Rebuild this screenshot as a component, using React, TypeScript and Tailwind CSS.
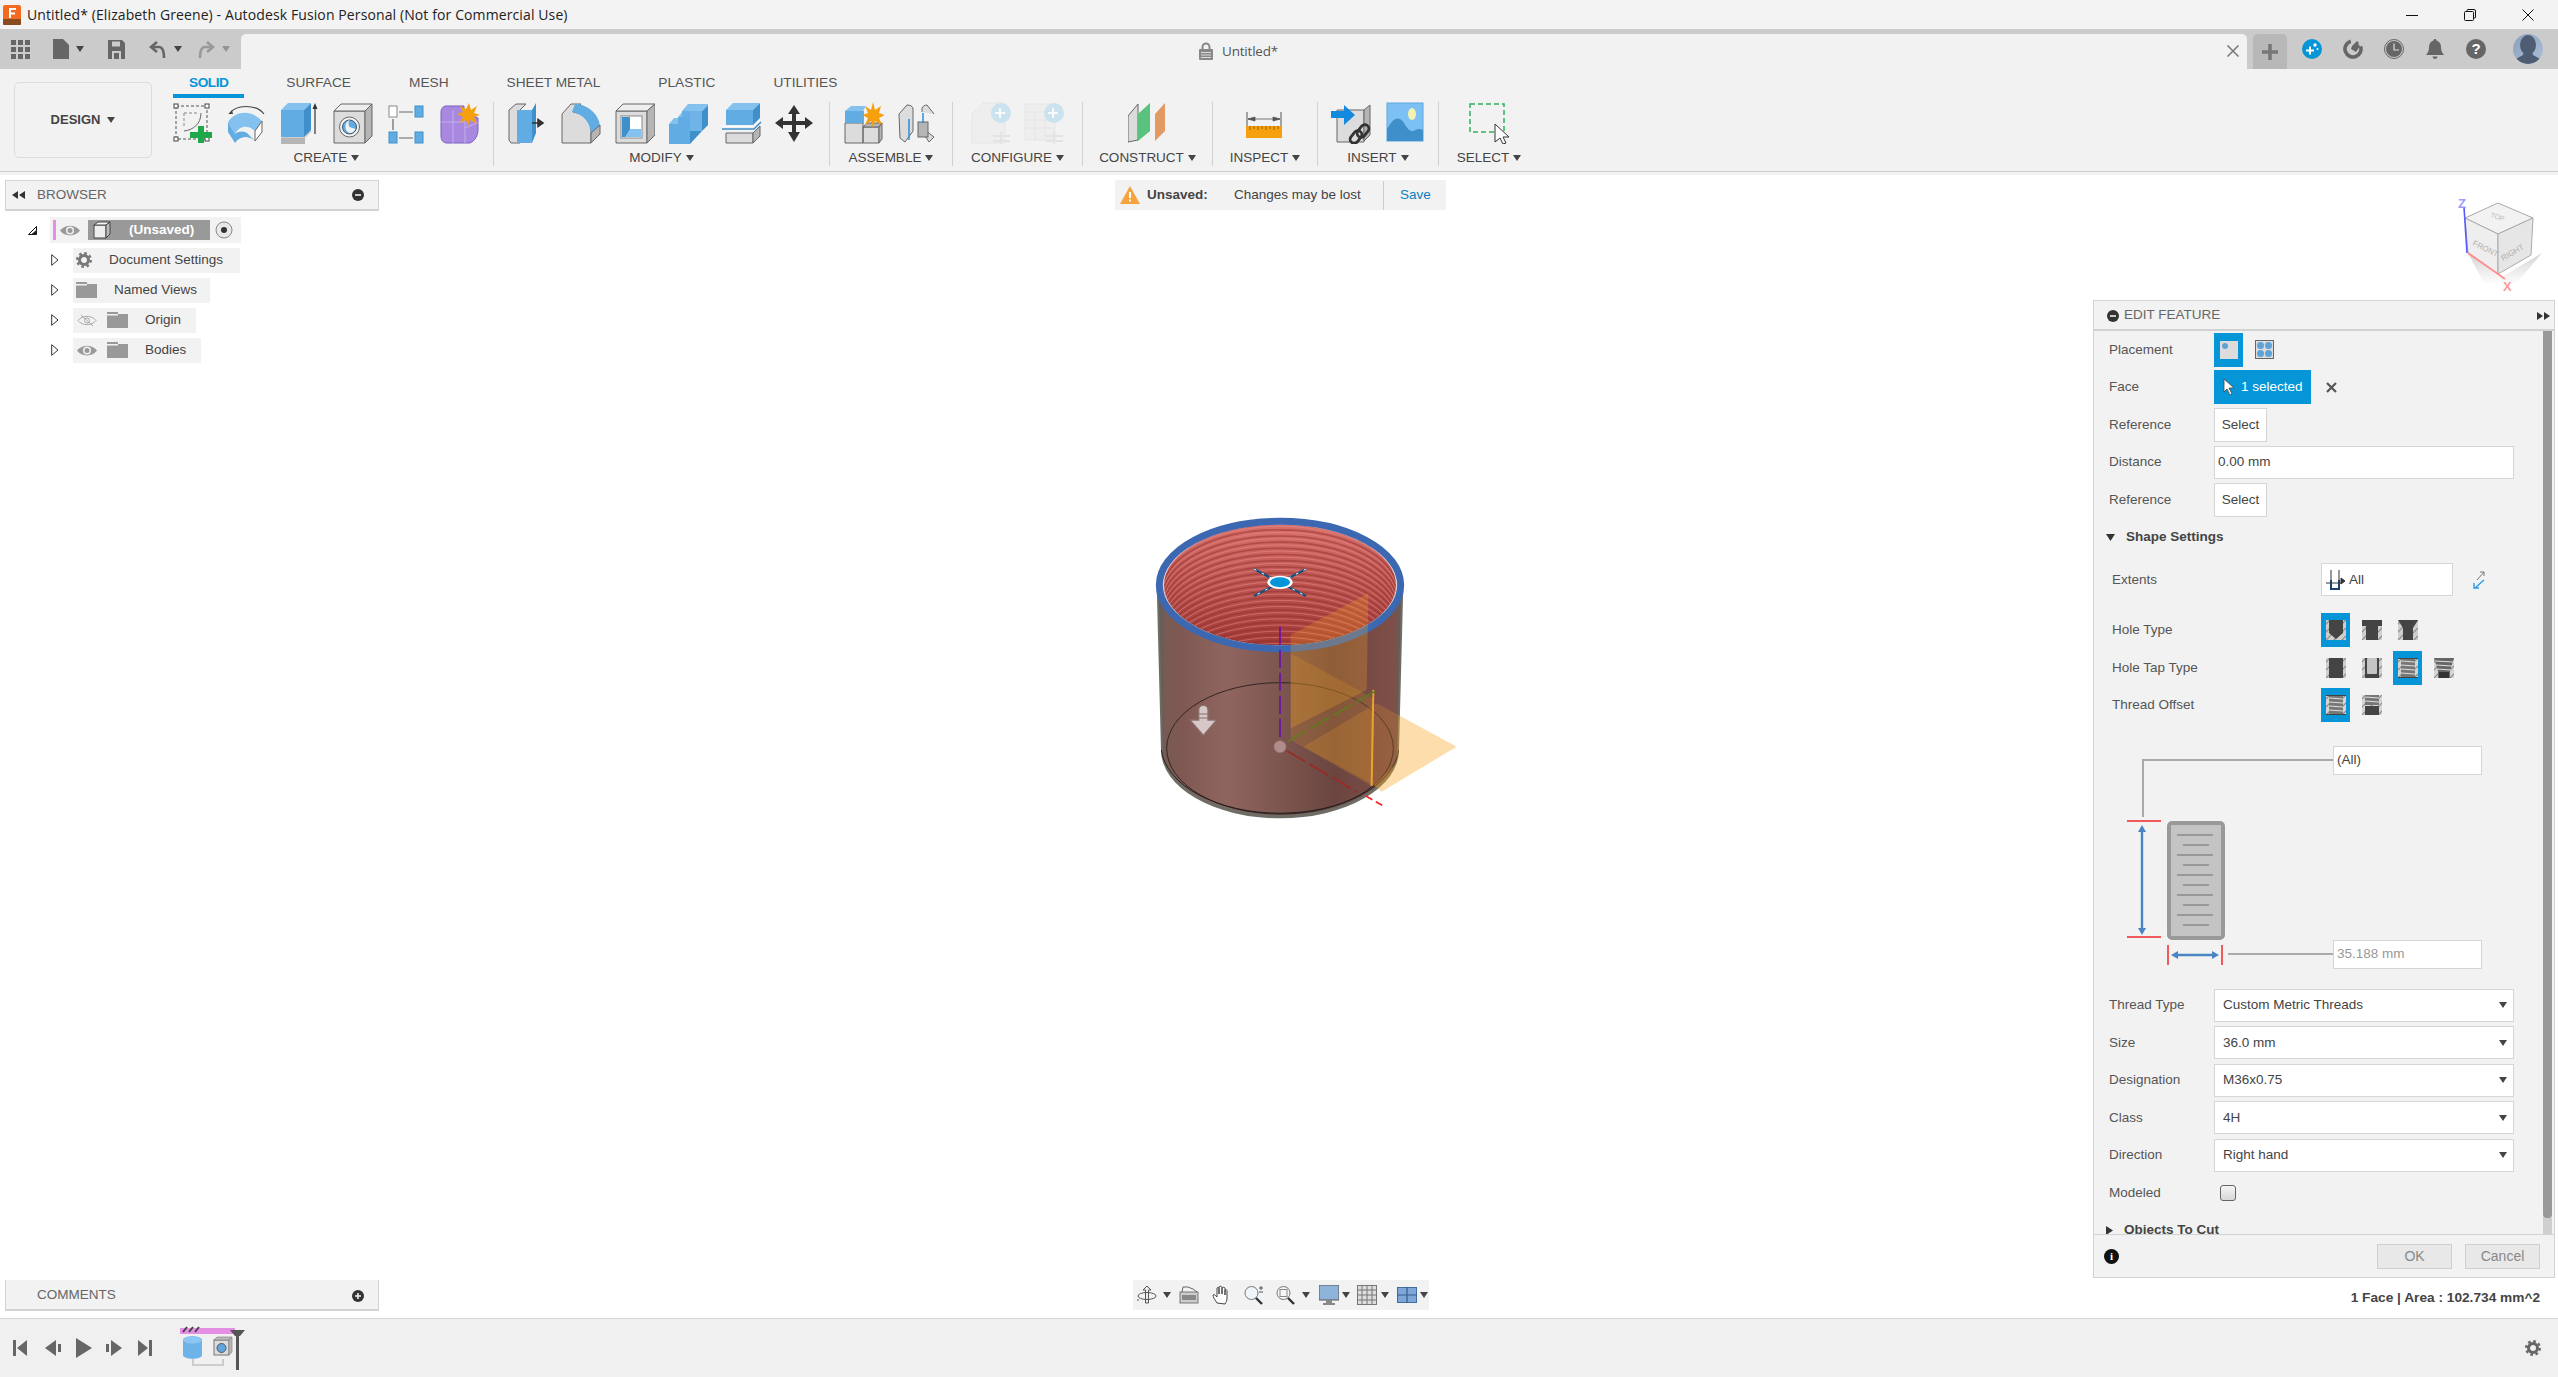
import React from 'react';

type IconProps = { className?: string };

const Caret = ({ className = 'ml-1' }: IconProps) => (
  <svg viewBox="0 0 8 6" className={`w-[8px] h-[6px] shrink-0 ${className}`}>
    <path d="M0 0h8L4 6z" fill="#444" />
  </svg>
);

// top bar
const AppLogo = () => (
  <svg viewBox="0 0 18 20" className="w-[18px] h-[20px]">
    <rect width="18" height="20" rx="2" fill="#f26b21" />
    <rect y="14" width="18" height="6" rx="1" fill="#8a4a20" />
    <path d="M6 3h7v2H8v2.5h4v2H8V13H6z" fill="#fff" />
  </svg>
);
const GridIcon = () => (
  <svg viewBox="0 0 19 19" className="w-[19px] h-[19px] fill-[#666]">
    {[0, 7, 14].map((y) => [0, 7, 14].map((x) => <rect key={`${x}${y}`} x={x} y={y} width="5" height="5" />))}
  </svg>
);
const FileIcon = () => (
  <svg viewBox="0 0 16 20" className="w-[16px] h-[20px]"><path d="M0 0h10l6 6v14H0z" fill="#666" /></svg>
);
const SaveIcon = () => (
  <svg viewBox="0 0 17 19" className="w-[17px] h-[19px]">
    <path d="M0 0h14l3 3v16H0z" fill="#666" />
    <rect x="4" y="1.5" width="8" height="5" fill="#cbcbcb" />
    <rect x="4" y="11" width="9" height="8" fill="#cbcbcb" />
    <rect x="6" y="13" width="5" height="6" fill="#666" />
  </svg>
);
const UndoIcon = ({ className }: IconProps) => (
  <svg viewBox="0 0 18 18" className={`w-[18px] h-[18px] ${className}`} fill="none" stroke="currentColor" strokeWidth="2.6">
    <path d="M8 2 2 7l6 5" />
    <path d="M3 7h7c4 0 5 4 5 11" />
  </svg>
);
const PlusIcon = () => (
  <svg viewBox="0 0 16 16" className="w-[16px] h-[16px]"><path d="M6.2 0h3.6v6.2H16v3.6H9.800V16H6.200V9.800H0V6.200h6.200z" fill="#777" /></svg>
);
const SparkleCircle = () => (
  <svg viewBox="0 0 20 20" className="w-[20px] h-[20px]">
    <circle cx="10" cy="10" r="10" fill="#0696d7" />
    <path d="M7 7.500v3H4v2h3v3h2v-3h3v-2H9v-3z" fill="#fff" />
    <circle cx="13" cy="6" r="1.700" fill="#fff" />
    <circle cx="15.500" cy="10" r="1" fill="#fff" />
  </svg>
);
const PlugIcon = () => (
  <svg viewBox="0 0 20 20" className="w-[20px] h-[20px]">
    <circle cx="10" cy="10" r="8" fill="none" stroke="#666" strokeWidth="3.600" strokeDasharray="38 12" transform="rotate(-20 10 10)" />
    <path d="M9 7l5-5 2 2-1 1 2 2-4 6-5-3z" fill="#666" />
  </svg>
);
const ClockIcon = () => (
  <svg viewBox="0 0 20 20" className="w-[20px] h-[20px]">
    <circle cx="10" cy="10" r="9.500" fill="none" stroke="#666" />
    <circle cx="10" cy="10" r="8" fill="#666" />
    <path d="M10 4.500V11h5" fill="none" stroke="#ddd" strokeWidth="1.200" />
  </svg>
);
const BellIcon = () => (
  <svg viewBox="0 0 18 20" className="w-[18px] h-[20px]">
    <path d="M9 0c1 0 1.500.6 1.500 1.600C13.500 2.500 15 5 15 8c0 4 1 5.500 3 8H0c2-2.500 3-4 3-8 0-3 1.500-5.500 4.500-6.400C7.500.6 8 0 9 0z" fill="#666" />
    <path d="M6.500 17.500h5A2.500 2.500 0 0 1 6.500 17.500z" fill="#666" />
  </svg>
);
const HelpIcon = () => (
  <div className="w-[20px] h-[20px] rounded-full bg-[#666] text-white text-[15px] font-bold leading-[20px] text-center">?</div>
);
const Avatar = () => (
  <svg viewBox="0 0 30 30" className="w-[30px] h-[30px]">
    <defs>
      <linearGradient id="av" x1="0" x2="1" y1="0" y2="1"><stop offset="0" stopColor="#8aa0bd" /><stop offset="1" stopColor="#aebfd6" /></linearGradient>
      <clipPath id="avc"><circle cx="15" cy="15" r="15" /></clipPath>
    </defs>
    <circle cx="15" cy="15" r="15" fill="url(#av)" />
    <g clipPath="url(#avc)" fill="#4e5d73">
      <ellipse cx="15" cy="11" rx="8" ry="10" />
      <path d="M11 17h8l1 4 9 5v6H1v-6l9-5z" />
    </g>
  </svg>
);

// toolbar icons, all 40x42
const Ic = ({ children }: { children: React.ReactNode }) => (
  <svg viewBox="0 0 40 42" className="w-[40px] h-[42px] shrink-0">{children}</svg>
);
const BL = '#62ace4';
const BD = '#3f8fca';
const BT = '#85c1ee';
const GR = '#dcdcdc';
const GD = '#b5b5b5';
const OL = '#666';

const SketchIc = () => (
  <Ic>
    <rect x="3" y="4" width="31" height="33" fill="none" stroke="#555" strokeDasharray="3 2" />
    <path d="M28 11C28 22 20 28 11 29" fill="none" stroke="#666" />
    <path d="M11 11h14M11 11v14" fill="none" stroke="#888" strokeDasharray="3 2" />
    {[[3, 4], [34, 4], [3, 37], [34, 37]].map(([x, y]) => <rect key={`${x}-${y}`} x={x - 2} y={y - 2} width="4" height="4" fill="#fff" stroke="#444" />)}
    <path d="M26 25h6v6h8v6h-8v5h-6v-5h-8v-6h8z" fill="#1ea84a" transform="translate(-1 -1)" />
  </Ic>
);
const RevolveIc = () => (
  <Ic>
    <path d="M3 12C10 2 30 2 38 12" fill="none" stroke="#444" strokeWidth="1.200" />
    <path d="M3 12l3-4 1 4z" fill="#444" />
    <path d="M2 20C10 8 26 8 36 19l-7 10C22 23 14 23 9 32z" fill={BT} />
    <path d="M2 20v10l7 11V32z M29 29v10l-8-8c-4-2-8-2-12 1v9C14 34 22 33 29 39z" fill={BL} />
    <path d="M29 29l7-10v11l-7 9z" fill="#fff" stroke="#666" />
  </Ic>
);
const ExtrudeIc = () => (
  <Ic>
    <path d="M1 36 25 36 32 29H8z" fill="#ccc" />
    <path d="M1 36h24v6H1z" fill={GD} />
    <path d="M1 8h23v27H1z" fill={BL} />
    <path d="M1 8l7-7h23l-7 7z" fill={BT} />
    <path d="M24 8l7-7v27l-7 7z" fill={BD} />
    <path d="M35 32V4" stroke="#333" strokeWidth="1.200" />
    <path d="M32.500 7 35 1l2.500 6z" fill="#333" />
  </Ic>
);
const HoleIc = () => (
  <Ic>
    <path d="M1 9h31v32H1z" fill={GR} stroke={OL} />
    <path d="M1 9l7-7h31l-7 7z" fill="#eee" stroke={OL} />
    <path d="M32 9l7-7v32l-7 7z" fill={GD} stroke={OL} />
    <circle cx="16.500" cy="25" r="10" fill="#f2f2f2" stroke={OL} />
    <circle cx="16.500" cy="25" r="7" fill={BL} stroke="#456" />
    <path d="M16.500 25a7 7 0 0 1 0-7 7 7 0 0 0-4 6 7 7 0 0 0 4 7 7 7 0 0 0 6-4z" fill="#f2f2f2" />
  </Ic>
);
const PatternIc = () => (
  <Ic>
    <rect x="2" y="4" width="8" height="11" fill="#fff" stroke="#888" />
    <rect x="28" y="4" width="8" height="11" fill={BL} stroke={BD} />
    <rect x="2" y="30" width="8" height="11" fill={BL} stroke={BD} />
    <rect x="28" y="30" width="8" height="11" fill={BL} stroke={BD} />
    <path d="M12 10h14M6 17v11M12 36h14" stroke="#666" strokeWidth="1.200" />
  </Ic>
);
const FormIc = () => (
  <Ic>
    <path d="M1 10c0-3 2-6 5-6h18v6l14 6v12c0 5-3 11-8 13H7c-4 0-6-3-6-7z" fill="#a989e0" stroke="#7d5fc2" />
    <path d="M1 20h24M13 8v33M25 10v31M25 26l14-6" stroke="#c4aeea" fill="none" />
    <path d="M29 1l2 7 6-4-3 7 6 2-6 2 3 7-7-4-2 6-2-6-6 3 3-6-6-3 6-2-3-6 6 3z" fill="#f5a00c" />
  </Ic>
);
const PressIc = () => (
  <Ic>
    <path d="M1 8l7-6h10L12 8v33H3l-2-3z" fill={GR} stroke={OL} />
    <path d="M9 8h15v33H9z" fill={BL} />
    <path d="M9 8l8-7h8v28l-1 12" fill="none" />
    <path d="M24 8l4-7v30l-4 10z" fill={BD} />
    <path d="M24 21h10M30 17.500l5 3.500-5 3.500z" stroke="#333" strokeWidth="1.600" fill="#333" />
  </Ic>
);
const FilletIc = () => (
  <Ic>
    <path d="M1 12 10 2h10L12 10 C24 12 30 20 30 29v12H1z" fill={GR} stroke={OL} />
    <path d="M14 2c12 0 24 10 25 22l-9 7C29 20 22 12 11 10z" fill={BL} />
    <path d="M30 31l9-8v9l-9 9z" fill={GD} stroke={OL} />
  </Ic>
);
const ShellIc = () => (
  <Ic>
    <path d="M1 9h31v32H1z" fill={GR} stroke={OL} />
    <path d="M1 9l7-7h32l-8 7z" fill="#eee" stroke={OL} />
    <path d="M32 9l8-7v31l-8 8z" fill={GD} stroke={OL} />
    <rect x="6" y="14" width="21" height="22" fill="#fff" stroke="#888" />
    <path d="M7 15h8v12h11v8H7z" fill={BD} />
    <path d="M15 27h11v8H10z" fill={BT} />
  </Ic>
);
const CombineIc = () => (
  <Ic>
    <path d="M1 22h9v-7h12v27H1z" fill={BL} />
    <path d="M1 22l5-6h4v6zM10 15l5-6h7v6z" fill={BT} />
    <path d="M14 9l6-7h21v0l-7 7z" fill={BT} />
    <path d="M14 9h20v20H22v13H14z" fill={BL} opacity=".9" />
    <path d="M34 9l7-7v20l-7 7zM22 29h12l-12 13z" fill={BD} />
  </Ic>
);
const OffsetIc = () => (
  <Ic>
    <path d="M4 8h27v15H4z" fill={BL} />
    <path d="M4 8l7-7h27l-7 7z" fill={BT} />
    <path d="M31 8l7-7v15l-7 7z" fill={BD} />
    <path d="M0 27h32l7-7" fill="none" stroke={BD} strokeWidth="1.500" />
    <path d="M0 24.500h31l7-7" fill="none" stroke="#fff" strokeWidth="1" />
    <path d="M4 31h27v10H4z" fill={GR} stroke={OL} />
    <path d="M31 31l7-7v10l-7 7z" fill={GD} stroke={OL} />
  </Ic>
);
const MoveIc = () => (
  <Ic>
    <path d="M19 3 13 12h4v7H8v-4l-8 6 8 6v-4h9v7h-4l6 10 6-10h-4v-7h9v4l8-6-8-6v4h-9v-7h4z" fill="#333" />
  </Ic>
);
const NewCompIc = () => (
  <Ic>
    <path d="M1 21h18v20H1zM19 25h16v16H19z" fill={GR} stroke={OL} />
    <path d="M19 25l4-4h15l-3 4zM35 25l3-4v16l-3 4z" fill={GD} stroke={OL} />
    <path d="M1 9h19v12H1z" fill={BL} />
    <path d="M1 9l6-5h15l-3 5z" fill={BT} />
    <path d="M29 0l2 8 6-4-2 7 6 2-6 3 3 7-7-4-2 7-2-7-6 4 3-7-6-3 6-2-3-7 6 4z" fill="#f5a00c" />
  </Ic>
);
const JointIc = () => (
  <Ic>
    <path d="M1 12 9 3c3 0 5 1 6 3v23L7 40 2 36z" fill={GR} stroke={OL} />
    <path d="M36 12l-7-9c-2 0-4 1-5 3v4M24 26v3l7 11 5-5z" fill={GR} stroke={OL} />
    <path d="M11 17v21" stroke="#2b8fdb" strokeWidth="1.500" />
    <rect x="20" y="20" width="10" height="15" fill={GD} stroke={OL} />
    <path d="M25 11v10" stroke="#2b8fdb" strokeWidth="1.500" />
  </Ic>
);
const ConfigIc = () => (
  <Ic>
    <g opacity=".65">
      <path d="M1 41V12L12 1h22v40z" fill="#ececec" stroke="#e2e2e2" />
      <circle cx="30" cy="11" r="10" fill="#b7dcee" />
      <path d="M29 6v10M24 11h10" stroke="#fff" strokeWidth="2" />
      <path d="M22 34h17M22 39h17M30 30v12" stroke="#dcdcdc" strokeWidth="2" />
    </g>
  </Ic>
);
const TableIc = () => (
  <Ic>
    <g opacity=".65">
      <rect x="1" y="2" width="30" height="36" fill="#ececec" stroke="#e2e2e2" />
      <path d="M1 10h30M1 18h30M1 26h30M11 10v28M21 10v28" stroke="#dedede" />
      <circle cx="30" cy="11" r="10" fill="#b7dcee" />
      <path d="M29 6v10M24 11h10" stroke="#fff" strokeWidth="2" />
      <path d="M22 34h17M22 39h17M30 30v12" stroke="#dcdcdc" strokeWidth="2" />
    </g>
  </Ic>
);
const PlaneIc = () => (
  <Ic>
    <path d="M0 14 10 2v36l-10 2z" fill={GR} stroke={OL} />
    <path d="M10 12 22 1v28L10 39z" fill="#59c27c" />
    <path d="M27 12 37 1v28L27 39z" fill="#e39a62" />
  </Ic>
);
const MeasureIc = () => (
  <Ic>
    <path d="M2 10v19M36 10v19" stroke="#555" />
    <path d="M3 17h32M3 17l7-2v4zM35 17l-7-2v4z" stroke="#555" fill="#555" strokeWidth=".8" />
    <rect x="1" y="24" width="36" height="12" fill="#f5a00c" />
    <path d="M5 24v4M9 24v3M13 24v4M17 24v3M21 24v4M25 24v3M29 24v4M33 24v3" stroke="#9a6200" />
  </Ic>
);
const LinkIc = () => (
  <Ic>
    <path d="M6 8h27v32H6z" fill={GR} stroke={OL} />
    <path d="M33 8l6-5v30l-6 6z" fill={GD} stroke={OL} />
    <path d="M0 9h13V3l11 10-11 10v-7H0z" fill="#1389e0" />
    <g fill="none" stroke="#333" strokeWidth="2.800">
      <rect x="28" y="22" width="8" height="14" rx="4" transform="rotate(38 32 29)" />
      <rect x="21" y="28" width="8" height="14" rx="4" transform="rotate(38 25 35)" />
    </g>
  </Ic>
);
const CanvasIc = () => (
  <Ic>
    <rect x="2" y="1" width="36" height="38" fill="#7cc0f4" stroke="#5aa6dd" />
    <ellipse cx="27" cy="12" rx="4" ry="6" fill="#f4f2b0" />
    <path d="M2 39V27c5-8 8-12 13-10 5 3 6 10 11 12 4 1 6-4 12-1v11z" fill="#3f8fca" />
  </Ic>
);
const SelectIc = () => (
  <Ic>
    <rect x="1" y="2" width="34" height="28" fill="none" stroke="#2fb35f" strokeWidth="1.500" strokeDasharray="5 3" />
    <path d="M26 22v18l5-4 3 6 3-1-3-6h6z" fill="#fff" stroke="#333" />
  </Ic>
);

const Tab = ({ label, active }: { label: string; active?: boolean }) => (
  <div className={`h-[29px] pt-[3px] px-[16px] flex items-center border-b-4 text-[13.7px] ${active ? 'border-[#0696d7] text-[#0696d7] font-bold tracking-[-0.5px]' : 'border-transparent text-[#555]'}`}>
    {label}
  </div>
);

const Group = ({ label, w, icons, last }: { label: string; w: string; icons: React.ReactNode; last?: boolean }) => (
  <div className={`${w} mt-[4px] h-[64px] flex flex-col items-center ${last ? '' : 'border-r border-[#d0d0d0]'}`}>
    <div className="flex gap-[13.5px] h-[42px]">{icons}</div>
    <div className="mt-[6px] h-[16px] flex items-center text-[13.5px] text-[#444]">
      {label}
      <Caret />
    </div>
  </div>
);

const Toolbar = () => (
  <div className="bg-[#f2f2f2] pb-[3px]">
    <div className="h-[103px] flex border-b border-[#cfcfcf]">
      <div className="ml-[14px] mt-[13px] w-[138px] h-[76px] rounded-[5px] border border-[#dcdcdc] flex items-center justify-center text-[13px] font-bold text-[#444]">
        DESIGN<Caret className="ml-[7px]" />
      </div>
      <div className="ml-[8px] flex flex-col">
        <div className="flex ml-[13px] gap-[26px]">
          <Tab label="SOLID" active />
          <Tab label="SURFACE" />
          <Tab label="MESH" />
          <Tab label="SHEET METAL" />
          <Tab label="PLASTIC" />
          <Tab label="UTILITIES" />
        </div>
        <div className="flex">
          <Group label="CREATE" w="w-[334px]" icons={<><SketchIc /><RevolveIc /><ExtrudeIc /><HoleIc /><PatternIc /><FormIc /></>} />
          <Group label="MODIFY" w="w-[336px]" icons={<><PressIc /><FilletIc /><ShellIc /><CombineIc /><OffsetIc /><MoveIc /></>} />
          <Group label="ASSEMBLE" w="w-[123px]" icons={<><NewCompIc /><JointIc /></>} />
          <Group label="CONFIGURE" w="w-[130px]" icons={<><ConfigIc /><TableIc /></>} />
          <Group label="CONSTRUCT" w="w-[130px]" icons={<PlaneIc />} />
          <Group label="INSPECT" w="w-[105px]" icons={<MeasureIc />} />
          <Group label="INSERT" w="w-[121px]" icons={<><LinkIc /><CanvasIc /></>} />
          <Group label="SELECT" w="w-[100px]" last icons={<SelectIc />} />
        </div>
      </div>
    </div>
  </div>
);

// browser tree
const Eye = ({ off }: { off?: boolean }) => (
  <svg viewBox="0 0 20 13" className="w-[20px] h-[13px] shrink-0">
    {off ? (
      <>
        <path d="M1 6.500C5 1 15 1 19 6.500 15 12 5 12 1 6.500z" fill="none" stroke="#aaa" />
        <circle cx="10" cy="6.500" r="2.500" fill="none" stroke="#aaa" />
        <path d="M4 1l12 11" stroke="#aaa" />
      </>
    ) : (
      <>
        <path d="M0 6.500C5 0 15 0 20 6.500 15 13 5 13 0 6.500z" fill="#999" />
        <circle cx="10" cy="6.500" r="4" fill="#f2f2f2" />
        <circle cx="10" cy="6.500" r="2.500" fill="#999" />
      </>
    )}
  </svg>
);
const Folder = () => (
  <svg viewBox="0 0 21 16" className="w-[21px] h-[16px] shrink-0">
    <path d="M0 0h11v2h10v14H0z" fill="#999" />
    <path d="M11 2H0v1.500h11z" fill="#f2f2f2" />
  </svg>
);
const Expand = () => (
  <svg viewBox="0 0 8 12" className="w-[8px] h-[12px] shrink-0"><path d="M.7.700 7 6 .7 11.300z" fill="#fff" stroke="#333" /></svg>
);
const Gear = () => (
  <svg viewBox="0 0 16 16" className="w-[16px] h-[16px] shrink-0">
    <circle cx="8" cy="8" r="4.500" fill="none" stroke="#777" strokeWidth="3" />
    <circle cx="8" cy="8" r="6.800" fill="none" stroke="#777" strokeWidth="2.400" strokeDasharray="2.700 2.640" />
  </svg>
);
const MinusCircle = ({ plus }: { plus?: boolean }) => (
  <svg viewBox="0 0 12 12" className="w-[12px] h-[12px] shrink-0">
    <circle cx="6" cy="6" r="6" fill="#333" />
    <path d={plus ? 'M3 6h6M6 3v6' : 'M3 6h6'} stroke="#f2f2f2" strokeWidth="1.600" />
  </svg>
);
const Rewind = ({ flip }: { flip?: boolean }) => (
  <svg viewBox="0 0 13 8" className={`w-[13px] h-[8px] shrink-0 ${flip ? 'rotate-180' : ''}`}>
    <path d="M6 0v8L0 4zM13 0v8L7 4z" fill="#333" />
  </svg>
);

const TreeRow = ({ w, left, label, labelW }: { w: string; left: React.ReactNode; label: string; labelW: string }) => (
  <div className="h-[30px] flex items-center pl-[46px]">
    <Expand />
    <div className={`ml-[14px] ${w} h-[25px] bg-[#f2f2f2] flex items-center pl-[3px]`}>
      {left}
      <span className={`${labelW} text-[13.5px] text-[#444] text-center whitespace-nowrap`}>{label}</span>
    </div>
  </div>
);

const Browser = () => (
  <div>
    <div className="h-[31px] w-[374px] bg-[#f2f2f2] border border-[#d2d2d2] border-b-2 flex items-center pl-[6px] pr-[14px] text-[13.5px] text-[#666]">
      <Rewind />
      <span className="ml-[12px] flex-1">BROWSER</span>
      <MinusCircle />
    </div>
    <div className="h-[6px]" />
    <div className="h-[26px] flex items-center pl-[23px]">
      <svg viewBox="0 0 9 9" className="w-[9px] h-[9px]"><path d="M8.500.500v8H.500z" fill="#fff" stroke="#111" /><path d="M8.500 4v4.500H3z" fill="#222" /></svg>
      <div className="ml-[13px] w-[191px] h-[26px] bg-[#f2f2f2] flex items-center">
        <div className="ml-[3px] w-[3px] h-[20px] bg-[#e48ee4]" />
        <div className="ml-[4px]"><Eye /></div>
        <div className="ml-[8px] w-[122px] h-[20px] bg-[#999] flex items-center">
          <svg viewBox="0 0 18 18" className="ml-[5px] w-[18px] h-[18px] shrink-0">
            <path d="M1 4h12v13H1z" fill="#eee" stroke="#444" />
            <path d="M1 4l4-3h12l-4 3z" fill="#f8f8f8" stroke="#444" />
            <path d="M13 4l4-3v12l-4 4z" fill="#bbb" stroke="#444" />
          </svg>
          <span className="ml-[18px] text-[13.5px] font-bold text-white">(Unsaved)</span>
        </div>
        <svg viewBox="0 0 18 18" className="ml-[5px] w-[18px] h-[18px]">
          <circle cx="9" cy="9" r="8" fill="#e8e8e8" stroke="#888" />
          <circle cx="9" cy="9" r="3" fill="#333" />
        </svg>
      </div>
    </div>
    <div className="h-[2px]" />
    <TreeRow w="w-[167px]" labelW="ml-[17px]" left={<Gear />} label="Document Settings" />
    <TreeRow w="w-[137px]" labelW="ml-[17px]" left={<Folder />} label="Named Views" />
    <TreeRow w="w-[123px]" labelW="ml-[17px]" left={<><span className="ml-[1px]"><Eye off /></span><span className="ml-[10px]"><Folder /></span></>} label="Origin" />
    <TreeRow w="w-[128px]" labelW="ml-[17px]" left={<><span className="ml-[1px]"><Eye /></span><span className="ml-[10px]"><Folder /></span></>} label="Bodies" />
  </div>
);

// model in the viewport, coordinates are 3x screen
const Model = () => (
  <svg viewBox="0 0 1200 1050" className="w-[400px] h-[350px]">
    <defs>
      <linearGradient id="body" x1="0" x2="1" y1="0" y2="0">
        <stop offset="0" stopColor="#5f5f58" />
        <stop offset=".03" stopColor="#7a5a54" />
        <stop offset=".1" stopColor="#805853" />
        <stop offset=".28" stopColor="#90655f" />
        <stop offset=".5" stopColor="#7d564f" />
        <stop offset=".72" stopColor="#6b4540" />
        <stop offset=".97" stopColor="#7f4f49" />
        <stop offset="1" stopColor="#5f5f58" />
      </linearGradient>
      <linearGradient id="inner" x1="0" x2="0" y1="0" y2="1">
        <stop offset="0" stopColor="#d96f6a" />
        <stop offset="1" stopColor="#a23a38" />
      </linearGradient>
      <clipPath id="mouth"><ellipse cx="570" cy="283" rx="350" ry="182" /></clipPath>
    </defs>
    <path d="M200 285 213 780A357 205 0 0 0 927 780L940 285z" fill="#6d6d66" />
    <path d="M206 285 218 775A352 200 0 0 0 922 775L934 285z" fill="url(#body)" />
    <ellipse cx="570" cy="775" rx="340" ry="197" fill="none" stroke="#2f2624" strokeWidth="3" />
    <path d="M214 780A357 205 0 0 0 926 780" fill="none" stroke="#222" strokeWidth="3" />
    <ellipse cx="570" cy="283" rx="350" ry="182" fill="url(#inner)" />
    <g clipPath="url(#mouth)" fill="none">
      {Array.from({ length: 22 }, (_, i) => (
        <g key={i}>
          <ellipse cx="570" cy={283 + i * 18.500} rx="352" ry="182" stroke="#8f2f2d" strokeWidth="5" opacity=".5" />
          <ellipse cx="570" cy={291 + i * 18.500} rx="352" ry="182" stroke="#ec9a94" strokeWidth="3" opacity=".45" />
        </g>
      ))}
    </g>
    <ellipse cx="570" cy="285" rx="351" ry="184" fill="none" stroke="#e6d4d2" strokeWidth="6" />
    <ellipse cx="570" cy="285" rx="362" ry="191" fill="none" stroke="#3c68b2" strokeWidth="21" />
    <g fill="#f6a623">
      <path d="M602 435 835 310 830 600 602 715z" opacity=".26" />
      <path d="M602 490 850 625 845 888 602 750z" opacity=".18" />
      <path d="M640 770 860 640 925 675 920 820 850 885z" opacity=".2" />
      <path d="M925 675 1100 770 875 905 850 885 920 820z" opacity=".38" />
    </g>
    <path d="M850 600 845 888" stroke="#f0a030" strokeWidth="6" />
    <path d="M570 410V760" stroke="#6a10a8" strokeWidth="5" strokeDasharray="55 14" />
    <path d="M592 755 862 600" stroke="#5f7a1f" strokeWidth="5" strokeDasharray="65 14" />
    <path d="M590 782 800 905" stroke="#9c2a24" strokeWidth="5" strokeDasharray="65 14" />
    <path d="M828 918 880 948" stroke="#ee2222" strokeWidth="5" strokeDasharray="22 12" />
    <circle cx="570" cy="770" r="18" fill="#b08c8a" stroke="#9a7573" strokeWidth="2" />
    <path d="M492 237 648 318M648 237 492 318" stroke="#1d4f7c" strokeWidth="7" />
    <path d="M492 237 648 318M648 237 492 318" stroke="#fff" strokeWidth="3" strokeDasharray="8 18" />
    <ellipse cx="570" cy="277" rx="38" ry="20" fill="#fff" />
    <ellipse cx="570" cy="277" rx="30" ry="15" fill="#0696d7" />
    <path d="M326 660a14 14 0 0 1 28 0v30h26l-40 46-40-46h26z" fill="#d6c8c8" stroke="#8a6f6d" strokeWidth="4" />
    <path d="M326 672h28M326 684h28" stroke="#8a6f6d" strokeWidth="3" />
  </svg>
);

const ViewCube = () => (
  <svg viewBox="0 0 90 100" className="w-[90px] h-[100px]">
    <defs>
      <linearGradient id="sh" x1="0" x2="0" y1="0" y2="1"><stop offset="0" stopColor="#aaa" stopOpacity=".5" /><stop offset="1" stopColor="#aaa" stopOpacity="0" /></linearGradient>
    </defs>
    <path d="M13 58 45 83 87 58 60 90H30z" fill="url(#sh)" />
    <path d="M10 23 43 8 78 23 43 39z" fill="#f2f2f2" stroke="#aaa" />
    <path d="M10 23 13 58 43 79V39z" fill="#eeeeee" stroke="#aaa" />
    <path d="M78 23 76 60 43 79V39z" fill="#e6e6e6" stroke="#aaa" />
    <path d="M9 12 12 58" stroke="#5a5aff" strokeWidth="1.600" />
    <path d="M13 58 50 84" stroke="#ff8f8f" strokeWidth="2" />
    <text x="3" y="13" fontSize="13" fill="#9a9aff" fontWeight="700">Z</text>
    <text x="48" y="96" fontSize="13" fill="#ff9a9a" fontWeight="700">X</text>
    <text x="35" y="22" fontSize="7" fill="#bbb" transform="rotate(18 35 22)">TOP</text>
    <text x="17" y="50" fontSize="8" fill="#b0b0b0" transform="rotate(26 17 50)">FRONT</text>
    <text x="48" y="66" fontSize="8" fill="#b0b0b0" transform="rotate(-30 48 66)">RIGHT</text>
  </svg>
);

const UnsavedBar = () => (
  <div className="absolute top-[5px] left-[1115px] w-[331px] h-[30px] bg-[#f2f2f2] flex items-center pl-[5px] text-[13.5px] text-[#444]">
    <svg viewBox="0 0 20 18" className="w-[20px] h-[18px]">
      <path d="M10 0 20 18H0z" fill="#f5a33c" />
      <path d="M9 6h2v6H9zM9 13.500h2v2H9z" fill="#fff" />
    </svg>
    <span className="ml-[7px] w-[87px] font-bold">Unsaved:</span>
    <span className="w-[149px] whitespace-nowrap">Changes may be lost</span>
    <span className="w-px h-[29px] bg-[#ccc]" />
    <span className="ml-[16px] text-[#0b7fc4]">Save</span>
  </div>
);

// navigation bar
const Nv = ({ children }: { children: React.ReactNode }) => (
  <svg viewBox="0 0 20 20" className="w-[20px] h-[20px] shrink-0">{children}</svg>
);
const NavBar = () => (
  <div className="absolute top-[1105px] left-[1133px] w-[296px] h-[30px] bg-[#f2f2f2] flex items-center pl-[4px]">
    <Nv>
      <path d="M10 1 6 5h2.500v13h3V5H14z" fill="#eee" stroke="#555" />
      <ellipse cx="10" cy="11" rx="9" ry="3.500" fill="none" stroke="#555" />
      <path d="M2 15h-2" stroke="#555" />
    </Nv>
    <Caret className="ml-[6px]" />
    <span className="ml-[8px]" />
    <Nv>
      <rect x="1" y="7" width="18" height="11" fill="#ccc" stroke="#777" />
      <rect x="3" y="10" width="14" height="5" fill="#888" />
      <path d="M3 7l1-5h5l5 2 4 3" fill="none" stroke="#666" />
    </Nv>
    <span className="ml-[13px]" />
    <Nv>
      <path d="M5 18c-2-3-4-6-4-8 1-1 2 0 4 2V3c1-1 2-1 2 0v6-7c1-1 2-1 3 0v7-6c1-1 2-1 3 0v7-5c1-1 2 0 2 1v7c0 3-1 4-2 6z" fill="#fff" stroke="#444" />
    </Nv>
    <span className="ml-[12px]" />
    <Nv>
      <circle cx="7.500" cy="8" r="6.500" fill="#eef6fb" stroke="#777" />
      <path d="M12 13l6 6" stroke="#333" strokeWidth="2.400" />
      <path d="M15 3h4M17 1v4M15 7h4" stroke="#555" />
    </Nv>
    <span className="ml-[12px]" />
    <Nv>
      <circle cx="7.500" cy="8" r="6.500" fill="#f6f6f6" stroke="#777" />
      <rect x="4" y="4.500" width="7" height="7" fill="none" stroke="#888" />
      <path d="M12 13l6 6" stroke="#333" strokeWidth="2.400" />
    </Nv>
    <Caret className="ml-[6px]" />
    <span className="ml-[9px]" />
    <Nv>
      <rect x="0" y="0" width="20" height="15" fill="#8eb4dc" stroke="#555" />
      <path d="M7 15h6v3H7zM4 18h12v2H4z" fill="#888" />
    </Nv>
    <Caret className="ml-[3px]" />
    <span className="ml-[7px]" />
    <Nv>
      <rect x=".5" y=".5" width="19" height="19" fill="#ddd" stroke="#777" />
      <path d="M5 0v20M10 0v20M15 0v20M0 5h20M0 10h20M0 15h20" stroke="#777" />
    </Nv>
    <Caret className="ml-[4px]" />
    <span className="ml-[8px]" />
    <Nv>
      <rect x=".5" y="2.500" width="19" height="15" fill="#7ea6d6" stroke="#3f6f9f" />
      <path d="M10 2v16M0 10h20" stroke="#315f8f" strokeWidth="1.200" />
    </Nv>
    <Caret className="ml-[3px]" />
  </div>
);

// feature dialog
const BlueBtn = ({ children }: { children: React.ReactNode }) => (
  <div className="w-[29px] h-[34px] bg-[#0696d7] flex items-center justify-center shrink-0">{children}</div>
);
const PlainBtn = ({ children }: { children: React.ReactNode }) => (
  <div className="w-[29px] h-[34px] flex items-center justify-center shrink-0">{children}</div>
);
const Hatch = ({ kind }: { kind: 'simple' | 'cb' | 'cs' | 'solid' | 'tap' | 'thread' | 'taper' | 'half' }) => (
  <svg viewBox="0 0 20 20" className="w-[20px] h-[20px]">
    <rect width="20" height="20" fill={kind === 'thread' || kind === 'half' || kind === 'taper' ? '#d5d5d5' : '#cfcfcf'} />
    <path d="M-2 6 6-2M-2 14 14-2M-2 22 22-2M6 22 22 6M14 22l8-8" stroke="#888" strokeWidth="1.200" />
    {kind === 'simple' && <path d="M3 0h14v13l-7 6-7-6z" fill="#444" />}
    {kind === 'cb' && <path d="M0 0h20v6h-4v14H4V6H0z" fill="#444" />}
    {kind === 'cs' && <path d="M0 0h20l-5 8v12H5V8z" fill="#444" />}
    {kind === 'solid' && <rect x="3" width="14" height="20" fill="#444" />}
    {kind === 'tap' && <><rect x="3" width="14" height="20" fill="#444" /><rect x="5" y="0" width="10" height="16" rx="1" fill="#c4c4c4" /></>}
    {kind === 'thread' && <><rect x="3" width="14" height="20" fill="#777" /><path d="M3 3l14 1M3 7l14 1M3 11l14 1M3 15l14 1" stroke="#ddd" strokeWidth="1.200" /><path d="M0 0h20v1H0zM0 19h20v1H0z" fill="#444" /></>}
    {kind === 'half' && <><rect x="3" width="14" height="10" fill="#777" /><path d="M3 2l14 1M3 6l14 1" stroke="#ddd" strokeWidth="1.200" /><rect x="3" y="11" width="14" height="9" fill="#444" /></>}
    {kind === 'taper' && <><path d="M0 0h20l-4 13v7H4v-7z" fill="#666" /><path d="M1 3l18 1M2 7l16 1M3 11l14 1" stroke="#ddd" strokeWidth="1.200" /><rect x="5" y="14" width="10" height="6" fill="#333" /></>}
  </svg>
);

const Row = ({ label, children, inner }: { label: string; children: React.ReactNode; inner?: boolean }) => (
  <div className={`h-[37.5px] flex items-center ${inner ? 'pl-[18px]' : 'pl-[15px]'}`}>
    <span className={`${inner ? 'w-[209px]' : 'w-[105px]'} shrink-0 text-[#555] whitespace-nowrap`}>{label}</span>
    <div className="flex items-center">{children}</div>
  </div>
);
const SelectBox = () => (
  <div className="w-[53px] h-[34px] bg-white border border-[#d6d6d6] flex items-center justify-center text-[#444]">Select</div>
);
const Dropdown = ({ value }: { value: string }) => (
  <div className="w-[300px] h-[33px] bg-white border border-[#d6d6d6] flex items-center pl-[8px] pr-[6px] text-[#444]">
    <span className="flex-1">{value}</span>
    <Caret className="" />
  </div>
);

const ThreadDiagram = () => (
  <svg viewBox="0 0 213 244" className="w-[213px] h-[244px] shrink-0">
    <path d="M23 74V17h190" fill="none" stroke="#aaa" strokeWidth="2" />
    <path d="M7 78h34M7 194h34" stroke="#f05a5a" strokeWidth="2" />
    <path d="M22 86v100" stroke="#4a86c4" strokeWidth="2.400" />
    <path d="M22 82l-4 7h8zM22 192l-4-7h8z" fill="#4a86c4" />
    <rect x="49" y="80" width="54" height="115" rx="3" fill="#c4c4c4" stroke="#999" strokeWidth="4" />
    {[0, 1, 2, 3, 4].map((i) => (
      <g key={i} stroke="#999" strokeWidth="2">
        <path d={`M57 ${92 + i * 20}h36`} />
        <path d={`M63 ${102 + i * 20}h26`} />
      </g>
    ))}
    <path d="M48 202v20M102 202v20" stroke="#f05a5a" strokeWidth="2" />
    <path d="M56 212h38" stroke="#4a86c4" strokeWidth="2.400" />
    <path d="M51 212l7-4v8zM99 212l-7-4v8z" fill="#4a86c4" />
    <path d="M108 211h105" stroke="#aaa" strokeWidth="2" />
  </svg>
);

const EditPanel = () => (
  <div className="w-[462px] h-[978px] bg-[#f2f2f2] border border-[#d2d2d2] flex flex-col text-[13.5px]">
    <div className="h-[30px] shrink-0 border-b-2 border-[#d2d2d2] flex items-center pl-[13px] pr-[4px] pt-[1px] text-[#666]">
      <MinusCircle />
      <span className="ml-[5px] flex-1">EDIT FEATURE</span>
      <Rewind flip />
    </div>
    <div className="relative h-[903px] overflow-hidden">
      <div className="absolute top-0 right-[2px] w-[9px] h-full bg-[#cfcfcf]">
        <div className="w-full h-[887px] bg-[#999] rounded-b-[4px]" />
      </div>
      <Row label="Placement">
        <BlueBtn>
          <svg viewBox="0 0 18 18" className="w-[18px] h-[18px]"><rect width="18" height="18" fill="#dcdcdc" /><circle cx="5" cy="5" r="3" fill="#5ea3d8" /></svg>
        </BlueBtn>
        <div className="ml-[12px] w-[19px] h-[19px] bg-[#dcdcdc] border border-[#666] grid grid-cols-2 p-[1px] gap-[1px]">
          {[0, 1, 2, 3].map((i) => <span key={i} className="rounded-full bg-[#5ea3d8]" />)}
        </div>
      </Row>
      <Row label="Face">
        <div className="w-[97px] h-[34px] bg-[#0696d7] flex items-center pl-[9px] text-white">
          <svg viewBox="0 0 12 18" className="w-[12px] h-[18px]"><path d="M1 1v13l3-3 3 6 2-1-3-6h5z" fill="#fff" stroke="#444" strokeWidth=".8" /></svg>
          <span className="ml-[6px] whitespace-nowrap">1 selected</span>
        </div>
        <svg viewBox="0 0 11 11" className="ml-[15px] w-[11px] h-[11px]"><path d="M1 1l9 9M10 1l-9 9" stroke="#555" strokeWidth="2.200" /></svg>
      </Row>
      <Row label="Reference"><SelectBox /></Row>
      <Row label="Distance">
        <div className="w-[300px] h-[33px] bg-white border border-[#d6d6d6] flex items-center pl-[3px] text-[#444]">0.00 mm</div>
      </Row>
      <Row label="Reference"><SelectBox /></Row>
      <div className="h-[37.5px] flex items-center pl-[12px] font-bold text-[#444]">
        <svg viewBox="0 0 9 7" className="w-[9px] h-[7px]"><path d="M0 0h9L4.500 7z" fill="#333" /></svg>
        <span className="ml-[11px]">Shape Settings</span>
      </div>
      <div className="h-[5px]" />
      <Row label="Extents" inner>
        <div className="w-[132px] h-[33px] bg-white border border-[#d6d6d6] flex items-center pl-[4px] text-[#444]">
          <svg viewBox="0 0 20 20" className="w-[20px] h-[20px]">
            <path d="M5 0v12M13 0v12M0 13h15M15 8l4 3-4 3z" stroke="#333" fill="#333" strokeWidth="1" />
            <path d="M5 10v9h8v-9" fill="none" stroke="#1d3f6e" strokeWidth="2" />
          </svg>
          <span className="ml-[3px]">All</span>
        </div>
        <svg viewBox="0 0 14 18" className="ml-[19px] w-[14px] h-[18px]" fill="none">
          <path d="M5 9l7-8M8 1h4v4" stroke="#777" />
          <path d="M12 9l-9 8M2 12v5h5" stroke="#2e9be6" strokeWidth="1.400" />
        </svg>
      </Row>
      <div className="h-[13px]" />
      <Row label="Hole Type" inner>
        <BlueBtn><Hatch kind="simple" /></BlueBtn>
        <span className="ml-[7px]"><PlainBtn><Hatch kind="cb" /></PlainBtn></span>
        <span className="ml-[7px]"><PlainBtn><Hatch kind="cs" /></PlainBtn></span>
      </Row>
      <Row label="Hole Tap Type" inner>
        <PlainBtn><Hatch kind="solid" /></PlainBtn>
        <span className="ml-[7px]"><PlainBtn><Hatch kind="tap" /></PlainBtn></span>
        <span className="ml-[7px]"><BlueBtn><Hatch kind="thread" /></BlueBtn></span>
        <span className="ml-[7px]"><PlainBtn><Hatch kind="taper" /></PlainBtn></span>
      </Row>
      <Row label="Thread Offset" inner>
        <BlueBtn><Hatch kind="thread" /></BlueBtn>
        <span className="ml-[7px]"><PlainBtn><Hatch kind="half" /></PlainBtn></span>
      </Row>
      <div className="h-[18.5px]" />
      <div className="flex pl-[26px] h-[244px]">
        <ThreadDiagram />
        <div className="w-[149px] flex flex-col justify-between pt-[3px] pb-[18px]">
          <div className="h-[29px] bg-white border border-[#d6d6d6] flex items-center pl-[3px] text-[#444]">(All)</div>
          <div className="h-[29px] bg-white border border-[#d6d6d6] flex items-center pl-[3px] text-[#999]">35.188 mm</div>
        </div>
      </div>
      <Row label="Thread Type"><Dropdown value="Custom Metric Threads" /></Row>
      <Row label="Size"><Dropdown value="36.0 mm" /></Row>
      <Row label="Designation"><Dropdown value="M36x0.75" /></Row>
      <Row label="Class"><Dropdown value="4H" /></Row>
      <Row label="Direction"><Dropdown value="Right hand" /></Row>
      <Row label="Modeled">
        <div className="ml-[6px] w-[16px] h-[16px] rounded-[3px] border border-[#666] bg-gradient-to-b from-[#f4f4f4] to-[#d8d8d8]" />
      </Row>
      <div className="h-[37.5px] flex items-center pl-[12px] font-bold text-[#444]">
        <svg viewBox="0 0 7 9" className="w-[7px] h-[9px]"><path d="M0 0v9l7-4.500z" fill="#333" /></svg>
        <span className="ml-[11px]">Objects To Cut</span>
      </div>
    </div>
    <div className="flex-1 border-t border-[#d2d2d2] flex items-center pl-[10px] pr-[14px]">
      <div className="w-[15px] h-[15px] rounded-full bg-[#111] text-white text-[11px] font-bold leading-[15px] text-center font-['Liberation_Serif',serif]">i</div>
      <div className="ml-auto w-[75px] h-[25px] bg-[#e8e8e8] border border-[#cfcfcf] flex items-center justify-center text-[#888] text-[14px]">OK</div>
      <div className="ml-[13px] w-[75px] h-[25px] bg-[#e8e8e8] border border-[#cfcfcf] flex items-center justify-center text-[#888] text-[14px]">Cancel</div>
    </div>
  </div>
);

const Timeline = () => (
  <div className="h-[59px] border-t border-[#d8d8d8] bg-[#f0f0f0] flex items-center pl-[13px] pr-[17px]">
    <svg viewBox="0 0 14 16" className="w-[14px] h-[16px]"><path d="M0 0h3v16H0zM14 0v16L4 8z" fill="#666" /></svg>
    <svg viewBox="0 0 16 16" className="ml-[18px] w-[16px] h-[16px]"><path d="M11 0v16L0 8zM13 4h3v8h-3z" fill="#666" /></svg>
    <svg viewBox="0 0 16 20" className="ml-[15px] w-[16px] h-[20px]"><path d="M0 0l16 10L0 20z" fill="#666" /></svg>
    <svg viewBox="0 0 16 16" className="ml-[14px] w-[16px] h-[16px]"><path d="M5 0v16l11-8zM0 4h3v8H0z" fill="#666" /></svg>
    <svg viewBox="0 0 14 16" className="ml-[16px] w-[14px] h-[16px]"><path d="M0 0v16l10-8zM11 0h3v16h-3z" fill="#666" /></svg>
    <svg viewBox="0 0 70 44" className="ml-[26px] w-[70px] h-[44px] shrink-0">
      <rect x="2" y="2" width="55" height="6" fill="#e48ee4" />
      <path d="M5 6l4-5M11 6l4-5M17 6l4-5" stroke="#444" strokeWidth="2" />
      <path d="M5 14c0-5 19-5 19 0v15c0 5-19 5-19 0z" fill="#6eb3e8" />
      <ellipse cx="14.500" cy="14" rx="9.500" ry="3.500" fill="#8cc6f2" />
      <rect x="36" y="14" width="15" height="15" fill="#dcdcdc" stroke="#777" />
      <path d="M36 14l3-3h15l-3 3zM51 14l3-3v15l-3 3z" fill="#bbb" stroke="#777" strokeWidth=".6" />
      <circle cx="43.500" cy="22" r="4.500" fill="#5fa6dc" stroke="#556" />
      <path d="M15 33v6h30v-6" fill="none" stroke="#ccc" strokeWidth="2" />
      <path d="M52 4h15l-5 6h-1v34h-3V10h-1z" fill="#555" />
    </svg>
    <div className="ml-auto">
      <svg viewBox="0 0 16 16" className="w-[16px] h-[16px]">
        <circle cx="8" cy="8" r="4.500" fill="none" stroke="#666" strokeWidth="3" />
        <circle cx="8" cy="8" r="6.800" fill="none" stroke="#666" strokeWidth="2.400" strokeDasharray="2.700 2.640" />
      </svg>
    </div>
  </div>
);

export default function App() {
  return (
    <div className="w-[2558px] h-[1377px] flex flex-col overflow-hidden bg-white font-['Liberation_Sans',Arial,sans-serif]">
      {/* window title */}
      <div className="h-[29px] bg-[#f3f3f3] flex items-center pl-[3px] pr-[24px]">
        <AppLogo />
        <span className="ml-[6px] text-[14px] text-[#222] font-['Open_Sans',sans-serif] tracking-[0.11px] whitespace-nowrap">
          Untitled* (Elizabeth Greene) - Autodesk Fusion Personal (Not for Commercial Use)
        </span>
        <div className="ml-auto flex items-center gap-[46px]">
          <svg viewBox="0 0 12 12" className="w-[12px] h-[12px]"><path d="M0 6.500h12" stroke="#111" /></svg>
          <svg viewBox="0 0 12 12" className="w-[12px] h-[12px]" fill="none" stroke="#111"><rect x=".5" y="2.500" width="9" height="9" rx="1" /><path d="M3 2.500V1.500a1 1 0 0 1 1-1h6a1.500 1.500 0 0 1 1.500 1.500v6a1 1 0 0 1-1 1h-1" /></svg>
          <svg viewBox="0 0 12 12" className="w-[12px] h-[12px]"><path d="M.5.500l11 11M11.500.500l-11 11" stroke="#111" /></svg>
        </div>
      </div>
      {/* tab strip */}
      <div className="h-[40px] bg-[#cbcbcb] flex items-end">
        <div className="w-[241px] h-[40px] flex items-center text-[#666] pl-[11px]">
          <GridIcon />
          <span className="ml-[23px]"><FileIcon /></span>
          <Caret className="ml-[7px]" />
          <span className="ml-[24px]"><SaveIcon /></span>
          <span className="ml-[24px]"><UndoIcon /></span>
          <Caret className="ml-[7px]" />
          <span className="ml-[15px]"><UndoIcon className="-scale-x-100 text-[#999]" /></span>
          <Caret className="ml-[7px] opacity-40" />
        </div>
        <div className="w-[2006px] h-[35px] bg-[#f2f2f2] rounded-t-[5px] flex items-center pr-[8px] pb-[1px]">
          <div className="ml-[958px] flex items-center">
            <svg viewBox="0 0 14 18" className="w-[14px] h-[18px]">
              <path d="M3.500 8V5a3.500 3.500 0 0 1 7 0v3" fill="none" stroke="#888" strokeWidth="2" />
              <rect y="7" width="14" height="11" rx="1" fill="#888" />
              <path d="M2 10.500h10M2 13h10M2 15.500h10" stroke="#ddd" />
            </svg>
            <span className="ml-[9px] text-[13.5px] text-[#555] font-['Open_Sans',sans-serif] tracking-[-0.2px]">Untitled*</span>
          </div>
          <svg viewBox="0 0 12 12" className="ml-auto w-[12px] h-[12px]"><path d="M.5.500l11 11M11.500.500l-11 11" stroke="#777" strokeWidth="1.500" /></svg>
        </div>
        <div className="ml-[6px] w-[34px] h-[35px] bg-[#b8b8b8] rounded-t-[5px] flex items-center justify-center"><PlusIcon /></div>
        <div className="h-[40px] flex items-center">
          <span className="ml-[15px]"><SparkleCircle /></span>
          <span className="ml-[21px]"><PlugIcon /></span>
          <span className="ml-[21px]"><ClockIcon /></span>
          <span className="ml-[22px]"><BellIcon /></span>
          <span className="ml-[22px]"><HelpIcon /></span>
          <span className="ml-[27px]"><Avatar /></span>
        </div>
      </div>
      <Toolbar />
      {/* viewport */}
      <div className="relative flex-1 flex justify-between pl-[5px] pr-[3px] pt-[5px] pb-[7px]">
        <div className="absolute top-[315px] left-[1090px]"><Model /></div>
        <UnsavedBar />
        <NavBar />
        <div className="relative w-[374px] flex flex-col justify-between">
          <Browser />
          <div className="h-[31px] pt-[2px] bg-[#f2f2f2] border border-t-0 border-[#d2d2d2] border-b-2 flex items-center pl-[31px] pr-[14px] text-[13.5px] text-[#666]">
            <span className="flex-1">COMMENTS</span>
            <MinusCircle plus />
          </div>
        </div>
        <div className="relative flex flex-col items-end">
          <div className="mr-[10px] mt-[15px] h-[100px] mb-[5px]"><ViewCube /></div>
          <EditPanel />
          <div className="mt-[10px] mr-[15px] text-[13.7px] font-bold text-[#444]">1 Face | Area : 102.734 mm^2</div>
        </div>
      </div>
      <Timeline />
    </div>
  );
}
